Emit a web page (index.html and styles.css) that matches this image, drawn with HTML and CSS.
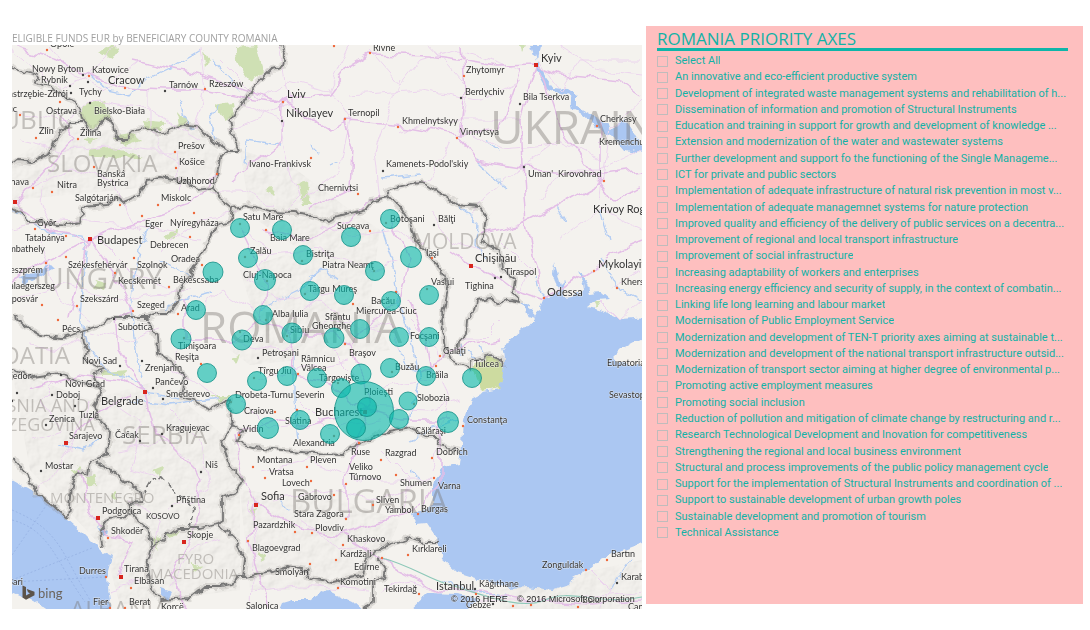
FILE: index.html
```html
<!DOCTYPE html>
<html lang="en">
<head>
<meta charset="utf-8">
<title>Eligible funds by county</title>
<link rel="stylesheet" href="styles.css">
</head>
<body>
<main class="report">
<section class="map-tile">
<h2 class="map-title">ELIGIBLE FUNDS EUR by BENEFICIARY COUNTY ROMANIA</h2>
<svg class="map" viewBox="12 45 630 564" role="img" aria-label="Map of eligible funds by county">
<defs>
<filter id="rough" filterUnits="userSpaceOnUse" x="0" y="30" width="660" height="600"><feTurbulence type="fractalNoise" baseFrequency="0.11" numOctaves="2" seed="4"/><feDisplacementMap in="SourceGraphic" scale="8" xChannelSelector="R" yChannelSelector="G"/></filter>
<filter id="winding" filterUnits="userSpaceOnUse" x="0" y="30" width="660" height="600"><feTurbulence type="fractalNoise" baseFrequency="0.05" numOctaves="2" seed="9"/><feDisplacementMap in="SourceGraphic" scale="14" xChannelSelector="R" yChannelSelector="G"/></filter>
<filter id="relief" filterUnits="userSpaceOnUse" x="0" y="30" width="660" height="600"><feTurbulence type="fractalNoise" baseFrequency="0.09" numOctaves="3" seed="2" result="n"/><feDiffuseLighting in="n" surfaceScale="2" lighting-color="#fff" result="l"><feDistantLight azimuth="225" elevation="55"/></feDiffuseLighting><feComposite in="l" in2="SourceGraphic" operator="in"/></filter>
<path id="frontiers" d="M282 45 286 53 283 66 273 68 253 88 231 120 234 138 239 150 227 150 213 141 200 128 183 125 170 130 160 133 147 128 133 132 128 140 118 140 115 128 107 117 97 127 90 130 82 118 80 112 72 100 50 88 35 82 38 75 28 72 12 67M83 122 70 122 58 135 50 153 33 162 17 160 12 164M227 150 220 158 217 175 212 188 197 190 187 182 160 178 147 180 140 195 123 202 117 197 108 205 82 207 80 222 67 225 43 222 27 222 20 212 12 208M212 188 220 198 233 208 247 205 270 212 293 213 310 215 325 222 333 217 365 210 373 200 390 197 400 207 410 222 415 240 430 257 442 270 448 290 442 320 445 350 450 360 470 368 470 361 490 355 502 360 503 368M390 197 387 190 405 185 420 183 433 188 447 197 457 205 480 207 487 217 483 243 500 250 502 270 515 278 513 293 522 302 510 300 500 304 490 298 477 300 475 310 468 320 467 335 458 342 457 353M233 208 231 222 217 226 203 250 190 273 180 290 177 303 170 312 160 312 147 317 123 317 113 317 100 325 80 332 63 338 40 335 27 327 12 315M82 332 84 342 88 350 86 360 105 370 93 373 97 383 102 388 95 407 97 418 110 432 108 455 90 462 88 475 78 472 72 485 70 508 68 518M12 370 33 377 60 373 78 382 102 387M12 458 27 475 37 493 68 518M97 462 113 472 140 492 142 502 128 503 133 515 110 518 100 532 103 548M133 515 147 528 152 548 147 565 150 588 160 600 190 598 203 587 220 587 233 585 237 577 243 577 245 558 235 540 218 523 200 528 177 528 163 538 152 548M218 523 223 520 223 498 237 492 243 480 230 465 222 442 232 425 228 400 210 410 193 400 182 397 185 377 173 363 158 353 157 337 147 320M230 422 243 432 237 442 253 447 303 452 340 455 357 445 383 433 410 428 427 437 437 437 440 445 460 450M243 577 273 572 287 567 307 570 310 578 333 582 363 575 367 558 373 555 380 547 397 542 410 537 423 542 440 542M377 558 385 568 383 578 373 582 373 602 363 609"/>
<g id="shapes-hill"><path d="M12 160 60 130 200 130 225 160 205 180 120 190 12 200ZM240 150 290 165 350 210 380 230 370 300 390 350 350 355 250 365 230 350 255 320 240 270 300 250 250 215ZM12 370 90 400 160 380 240 450 240 590 120 605 105 550 30 470ZM240 490 340 500 400 520 370 590 250 590ZM500 590 642 560 642 609 500 609Z"/></g>
</defs>
<rect class="land" x="12" y="45" width="630" height="564"/>
<g class="hills" filter="url(#relief)"><use href="#shapes-hill"/></g>
<g class="forest" filter="url(#rough)">
<path d="M235 47 256 45 264 73 250 82 238 65ZM84 104 104 100 110 118 90 128 80 118ZM106 46 120 48 112 60 98 52ZM204 50 210 62 206 66ZM214 105 232 102 234 115 224 122ZM142 120 165 122 160 130 145 130ZM178 112 187 122 180 126ZM90 150 110 148 130 152 142 157 110 158 88 156ZM114 136 134 134 140 140 125 146ZM84 140 98 138 90 144ZM299 184 307 182 311 206 303 206ZM266 190 274 188 272 196ZM520 47 526 46 522 54ZM169 230 177 228 176 240 164 238ZM96 280 108 284 106 290 92 288ZM102 372 128 370 122 376 104 376ZM232 358 240 354 236 364ZM70 470 80 466 76 474ZM86 478 94 476 96 484 86 486ZM152 470 162 466 160 476ZM250 510 258 508 256 518ZM256 550 266 556 260 562ZM150 540 160 536 158 550ZM190 560 200 568 194 572ZM165 535 178 530 172 538ZM112 494 116 492 116 500ZM210 395 230 395 222 402ZM592 300 600 302 596 308Z"/>
<path class="delta" d="M472 367 486 357 498 358 504 370 501 388 482 391 476 380Z"/>
</g>
<g class="water" filter="url(#rough)">
<path d="M544 298 540 307 535 317 523 330 508 343 503 345 505 360 502 380 500 389 483 392 473 397 467 410 464 420 462 445 460 463 443 467 435 477 433 487 433 505 420 513 412 515 417 524 427 523 437 538 442 558 457 572 473 577 507 588 527 587 553 590 570 585 573 578 587 570 602 558 650 540 650 367 617 362 613 357 620 350 650 334 650 317 620 319 600 310 588 307 597 300 610 299 602 292 590 293 583 275 577 270 584 284 585 290 574 296 562 297 566 280 560 286 554 262 553 275 558 292Z"/>
<path d="M5 476 37 494 67 518 83 532 102 551 112 556 107 575 108 588 112 615 55 615 33 600 5 588ZM277 615 282 603 292 600 310 600 327 590 337 595 353 602 367 615ZM405 615 427 594 457 595 480 599 468 605 466 615ZM537 62 544 76 553 88 568 89 577 95 577 107 597 118 612 128 625 120 642 145 650 150 650 156 625 150 615 138 600 130 588 118 572 110 570 97 560 95 545 86 536 70ZM532 45 540 45 537 60ZM20 277 38 270 52 264 56 268 40 277 24 284ZM96 526 106 530 104 538ZM160 588 172 592 168 600 160 596ZM522 302 532 310 536 318 528 316Z"/>
</g>
<g class="rivers" filter="url(#rough)">
<path d="M12 208 30 222 50 232 82 236 86 250 82 290 80 320 90 350 108 372 132 378 150 394 180 398M150 222 140 250 132 290 130 310 136 350 142 378M92 75 108 90 130 95 145 80 170 68 200 50M212 60 228 78 240 90M180 100 184 118 192 130M245 165 247 140 280 145M382 230 392 260 398 300 412 340 420 380 405 430M310 275 325 270 340 280M260 310 300 290 320 270M294 350 294 400 298 440M477 222 476 245 486 260M475 160 490 175 507 188M484 140 500 150M535 276 538 290 545 297M310 145 320 155M330 165 340 160M382 178 420 174M600 258 620 290 640 300M160 260 190 275M210 292 180 300 165 310M130 400 170 405 220 398M215 140 210 118 220 105M60 445 84 450 98 440M410 440 440 425 460 420M410 470 420 480M280 500 290 510M456 204 470 215 476 222M460 345 463 355M468 350 476 360M480 345 484 354M440 580 470 590 510 596M600 210 610 240M400 350 405 365 420 372M610 590 630 560M556 205 566 222"/>
</g>
<g class="roads minor" filter="url(#winding)">
<path d="M12 50 60 90 88 75 120 45M50 45 70 70 100 90 140 60M12 110 60 120 100 100 150 110 200 140M20 140 60 150 110 145 150 150 176 150 180 190M30 190 70 170 110 180 140 230M60 240 40 200 60 150M12 230 60 220 130 225 200 240M12 300 60 285 120 300 190 290M40 240 60 300 90 320M100 240 130 270 170 290M160 250 200 220 240 215M200 45 205 90 195 130M150 90 150 130 180 170M220 60 260 100 290 80 330 90 350 45M230 130 290 105 280 45M290 170 280 120 240 105M330 90 350 120 340 170 300 200M350 95 420 90 480 100 520 80M370 50 400 85 420 60 460 50 520 70M380 200 375 150 385 120 400 80M430 45 470 90 460 130 500 150 560 145M400 130 440 120 520 120M450 140 430 180 400 190M540 60 560 90 580 60 640 60M560 45 600 70 642 75M470 210 520 170 560 140 600 160M540 200 560 170 600 170 642 150M420 245 400 230 350 235 320 225M240 230 270 250 250 280 280 300 340 290M260 255 320 250 370 270 400 260M195 310 220 290 260 315M230 340 280 350 330 320 380 330M190 330 170 370 200 385 220 400M290 320 320 300 360 330 390 320 400 350M257 380 300 370 350 360M240 400 270 430 310 425M300 400 330 430 380 420M330 350 370 390 430 380M410 320 430 340 440 360M440 370 450 400 440 440 430 470M460 400 430 410 370 407M60 380 40 400 60 430 30 440M90 400 70 450 40 490M110 400 140 420 130 470 160 480M170 410 200 440 210 490 170 510M190 460 160 440 120 450M220 540 190 550 170 590M250 500 255 540 250 600M260 470 310 460 360 480 430 480M270 500 330 490 380 500 430 480M300 520 340 550 380 540M400 515 410 480 380 450M250 590 300 585 370 590M480 600 560 600 642 590M590 570 610 590 600 609M600 200 610 130 642 100M560 240 600 210 642 230M500 240 530 270 520 290M600 300 620 320 642 300M430 210 450 240 480 250M610 290 642 270M500 320 480 340 460 340M90 330 130 340 160 330M30 345 60 350 80 340M130 500 160 520 150 560M110 590 140 580M440 590 410 580 380 590M280 215 300 195 290 170M210 190 240 190 270 205"/>
</g>
<g class="roads" filter="url(#winding)">
<path d="M12 45 60 60 90 76 125 88 165 90 205 90 245 98 283 102 290 97 330 93 350 66 370 54 430 56 500 66 537 65 560 75 620 80 642 95M15 205 50 165 76 138 60 110M15 205 50 230 90 240 130 225 190 205 215 175M90 240 75 290 68 320M90 240 115 275 132 310 115 318 118 350 144 392 155 430 195 470 200 480M90 240 40 265 12 280M283 102 282 140 250 165 230 180M283 102 330 130 345 120 405 125 460 135 500 128 520 70M345 120 352 150 350 190 310 210M457 137 475 160 523 167 603 175 642 170M537 65 520 120 522 165 526 225 540 290M460 137 465 90 462 45M603 180 560 205 520 225 480 235M544 300 515 290 495 275 472 265 450 250M544 300 590 270 618 250 642 240M600 120 600 180M185 300 185 340 235 340 260 320 265 280 240 228M260 320 292 335 335 335 350 345 360 330 400 300 410 258 390 220M350 345 365 380 368 410 357 440 345 480 345 520M368 410 400 420 450 420M368 410 320 380 290 375 292 335M368 410 300 425 280 420 237 435M145 392 120 380 80 375 30 390M257 502 240 470 235 435M257 502 300 530 340 535 400 515 420 505M345 535 380 558 400 570 440 590 475 590M257 502 248 540 270 609M200 480 195 530 170 575 185 609M133 60 200 75 283 102M540 70 550 100 560 130 600 180 615 200 642 190M66 445 100 410 130 395M120 575 130 540 105 535 90 510 80 470M470 590 530 600 590 604 642 600M420 370 440 360 470 345 500 340M430 370 425 340 410 300M260 230 300 240 350 220 380 195M440 420 440 480 425 510"/>
</g>
<path class="motorway" d="M382 558C410 565 430 580 450 585S520 612 545 600 600 606 642 597"/>
<path class="ferry" d="M12 580 92 548M12 510C60 530 60 550 90 600M12 520C50 530 55 560 85 602M12 582 105 577M12 555 50 500"/>
<g filter="url(#rough)"><use class="frontier-halo" href="#frontiers"/><use class="frontier" href="#frontiers"/><path class="frontier dashed" d="M143 495 153 478 163 477 175 492 195 508 190 527"/></g>

<g class="country">
<text class="c-46" x="490" y="144">UKRAINE</text><text class="c-44" x="200" y="343">ROMANIA</text>
<text class="c-33" x="290" y="513">BULGARIA</text><text class="c-30" x="20" y="289">HUNGARY</text>
<text class="c-26" x="122" y="444">SERBIA</text><text class="c-24" x="47" y="172">SLOVAKIA</text>
<text class="c-21" x="413" y="249">MOLDOVA</text><text class="c-26 end" x="74" y="129">REPUBLIC</text>
<text class="c-24 end" x="70" y="364">CROATIA</text><text class="c-18 end" x="89" y="412">BOSNIA AND</text>
<text class="c-18 end" x="95" y="431">HERZEGOVINA</text><text class="c-15" x="50" y="503">MONTENEGRO</text>
<text class="c-15" x="177" y="564">FYRO</text><text class="c-15" x="150" y="579">MACEDONIA</text>
<text class="c-24" x="70" y="618">ALBANIA</text>
</g>

<g class="towns">
<path d="M47 50h0M60 102h0M20 115h0M89 76h0M125 88h0M205 89h0M36 138h0M78 139h0M94 167h0M175 152h0M176 168h0M217 174h0M33 188h0M52 192h0M120 205h0M158 205h0M142 216h0M194 213h0M35 229h0M66 236h0M190 237h0M134 258h0M202 265h0M66 257h0M46 263h0M115 273h0M169 287h0M77 306h0M42 305h0M133 311h0M58 320h0M178 314h0M201 364h0M283 102h0M334 46h0M370 53h0M345 119h0M398 127h0M311 158h0M358 194h0M464 76h0M457 138h0M597 126h0M604 181h0M544 298h0M594 271h0M617 288h0M266 230h0M370 231h0M353 304h0M396 292h0M432 258h0M345 344h0M298 374h0M275 412h0M297 410h0M440 356h0M436 366h0M463 426h0M239 435h0M359 443h0M381 460h0M396 475h0M432 458h0M434 478h0M418 514h0M373 505h0M346 519h0M334 495h0M346 484h0M311 481h0M307 467h0M253 467h0M265 478h0M295 532h0M312 533h0M343 545h0M336 560h0M310 564h0M248 541h0M382 558h0M338 588h0M408 555h0M419 594h0M586 570h0M607 560h0M106 577h0M108 538h0M131 588h0M110 608h0M125 608h0M476 594h0M513 606h0M531 605h0M578 607h0"/>
<path class="minor-town" d="M83 75h0M88 82h0M70 86h0M71 93h0M90 103h0M165 91h0M282 121h0M461 98h0M520 104h0M383 171h0M524 167h0M434 225h0M495 278h0M501 277h0M114 319h0M61 375h0M120 366h0M142 361h0M153 388h0M163 399h0M17 393h0M12 401h0M52 395h0M75 406h0M46 425h0M41 471h0M140 441h0M162 434h0M201 472h0M172 506h0M258 358h0M475 589h0M617 583h0M493 604h0"/>
<path class="county-seat" d="M245 257h0M302 261h0M374 271h0M267 281h0M305 294h0M266 320h0M287 336h0M240 332h0M184 338h0M240 224h0M254 378h0M338 383h0M392 372h0M414 404h0M334 436h0M231 402h0M386 223h0M427 289h0"/>
<path class="capital" d="M536 65h0M90 239h0M15 202h0M471 266h0M145 392h0M66 443h0M98 518h0M184 542h0M121 577h0M256 505h0M365 412h0"/>
</g>

<g class="labels">
<text x="50" y="47">Opole</text><text x="32" y="72">Nowy Bytom</text><text x="92" y="73">Katowice</text><text x="41" y="83">Rybnik</text><text class="end" x="68" y="97">Jastrzębie-Zdrój</text><text x="79" y="95">Tychy</text><text x="169" y="88">Tarnów</text><text x="209" y="87">Rzeszów</text><text x="46" y="114">Ostrava</text><text x="94" y="114">Bielsko-Biała</text><text class="end" x="17" y="112">Olomouc</text><text x="39" y="134">Zlin</text><text x="80" y="136">Žilina</text><text x="178" y="149">Prešov</text><text x="179" y="165">Košice</text><text x="97" y="177">Banská</text><text x="97" y="186">Bystrica</text><text class="end" x="29" y="185">Trnava</text><text x="57" y="188">Nitra</text><text x="176" y="184">Uzhhorod</text><text x="75" y="201">Salgótarján</text><text x="161" y="201">Miskolc</text><text x="37" y="226">Győr</text><text x="145" y="227">Eger</text><text x="170" y="226">Nyíregyháza</text><text x="25" y="241">Tatabánya</text><text class="end" x="45" y="252">Szombathely</text><text x="150" y="248">Debrecen</text><text x="171" y="262">Oradea</text><text class="end" x="43" y="273">Veszprém</text><text x="68" y="268">Székesfehérvár</text><text x="137" y="268">Szolnok</text><text x="118" y="284">Kecskemét</text><text x="173" y="283">Békéscsaba</text><text class="end" x="55" y="289">Zalaegerszeg</text><text class="end" x="38" y="302">Kaposvár</text><text x="80" y="302">Szekszárd</text><text x="137" y="308">Szeged</text><text x="181" y="311">Arad</text><text x="62" y="332">Pécs</text><text x="118" y="330">Subotica</text><text x="178" y="349">Timişoara</text><text x="175" y="360">Reşiţa</text><text x="82" y="364">Novi Sad</text><text x="145" y="371">Zrenjanin</text><text class="end" x="31" y="379">Prijedor</text><text x="65" y="387">Novi Grad</text><text x="155" y="385">Pančevo</text><text x="56" y="398">Doboj</text><text x="166" y="397">Smederevo</text><text x="79" y="418">Tuzla</text><text x="49" y="422">Zenica</text><text x="69" y="439">Sarajevo</text><text x="115" y="438">Čačak</text><text x="166" y="431">Kragujevac</text><text x="45" y="469">Mostar</text><text x="205" y="468">Niš</text><text x="176" y="503">Pfiština</text><text class="region" x="146" y="519">KOSOVO</text><text x="102" y="514">Podgorica</text><text x="111" y="534">Shkodër</text><text x="187" y="538">Skopje</text><text x="79" y="574">Durres</text><text x="124" y="572">Tirana</text><text x="134" y="584">Elbasan</text><text class="end" x="23" y="585">Bari</text><text x="93" y="605">Fier</text><text x="129" y="605">Berat</text><text x="161" y="610">Korcë</text>
<text x="373" y="51">Rivne</text><text x="466" y="73">Zhytomyr</text><text x="465" y="95">Berdychiv</text><text x="523" y="100">Bila Tserkva</text><text x="348" y="116">Ternopil</text><text x="402" y="124">Khmelnytskyy</text><text x="460" y="135">Vinnytsya</text><text x="600" y="122">Cherkasy</text><text x="599" y="145">Kremenchuk</text><text x="249" y="167">Ivano-Frankivsk</text><text x="386" y="167">Kamenets-Podol'skiy</text><text x="528" y="177">Uman'</text><text x="558" y="177">Kirovohrad</text><text x="318" y="191">Chernivtsi</text><text x="243" y="220">Satu Mare</text><text x="270" y="241">Baia Mare</text><text x="337" y="229">Suceava</text><text x="390" y="222">Botoşani</text><text x="438" y="222">Bălţi</text><text x="250" y="254">Zalău</text><text x="306" y="257">Bistriţa</text><text x="322" y="268">Piatra Neamţ</text><text x="243" y="278">Cluj-Napoca</text><text x="426" y="256">Iaşi</text><text x="431" y="285">Vaslui</text><text x="505" y="275">Tiraspol</text><text x="465" y="289">Tighina</text><text x="308" y="292">Târgu Mureş</text><text x="371" y="304">Bacău</text><text x="356" y="314">Miercurea-Ciuc</text><text x="272" y="317">Alba Iulia</text><text x="325" y="320">Sfântu</text><text x="312" y="329">Gheorghe</text><text x="290" y="333">Sibiu</text><text x="410" y="339">Focşani</text><text x="243" y="342">Deva</text><text x="262" y="356">Petroşani</text><text x="349" y="356">Braşov</text><text x="443" y="354">Galaţi</text><text x="301" y="362">Râmnicu</text><text x="301" y="371">Vâlcea</text><text x="395" y="370">Buzău</text><text x="474" y="367">Tulcea</text><text x="258" y="374">Tîrgu Jiu</text><text x="319" y="381">Târgovişte</text><text x="426" y="378">Brăila</text><text x="364" y="395">Ploieşti</text><text x="235" y="398">Drobeta-Turnu Severin</text><text x="417" y="401">Slobozia</text><text x="244" y="414">Craiova</text><text x="285" y="424">Slatina</text><text x="467" y="423">Constanţa</text><text x="243" y="432">Vidin</text><text x="415" y="434">Călăraşi</text><text x="293" y="446">Alexandria</text><text x="351" y="455">Ruse</text><text x="385" y="456">Razgrad</text><text x="436" y="455">Dobrich</text><text x="257" y="463">Montana</text><text x="310" y="463">Pleven</text><text x="349" y="470">Veliko</text><text x="349" y="480">Tŭrnovo</text><text x="269" y="475">Vratsa</text><text x="282" y="486">Lovech</text><text x="400" y="486">Shumen</text><text x="438" y="489">Varna</text><text x="298" y="500">Gabrovo</text><text x="376" y="503">Sliven</text><text x="385" y="513">Yambol</text><text x="421" y="512">Burgas</text><text x="294" y="517">Stara Zagora</text><text x="253" y="528">Pazardzhik</text><text x="315" y="531">Plovdiv</text><text x="347" y="542">Khaskovo</text><text x="252" y="551">Blagoevgrad</text><text x="340" y="557">Kardžali</text><text x="412" y="552">Kırklareli</text><text x="354" y="570">Edirne</text><text x="275" y="575">Smolyan</text><text x="340" y="585">Komotini</text><text x="384" y="592">Tekirdağ</text><text x="246" y="609">Salonica</text><text x="479" y="587">Kâğıthane</text><text x="466" y="608">Gebze</text><text x="542" y="568">Zonguldak</text><text x="611" y="557">Bartın</text><text x="621" y="580">Karabük</text><text x="628" y="610">Cankırı</text><text x="582" y="603">Bolu</text><text x="621" y="285">Kherson</text><text x="607" y="366">Eupatoria</text><text x="609" y="398">Sevastopol</text>
</g>
<g class="labels city">
<text x="108" y="84">Cracow</text><text x="287" y="98">Lviv</text><text x="286" y="117">Nikolayev</text><text x="541" y="62">Kyiv</text><text x="97" y="244">Budapest</text><text x="101" y="405">Belgrade</text><text x="475" y="262">Chişinău</text><text x="547" y="296">Odessa</text><text x="598" y="268">Mykolayiv</text><text x="593" y="213">Krivoy Rog</text><text x="261" y="500">Sofia</text><text x="315" y="416">Bucharest</text><text x="436" y="590">Istanbul</text>
</g>

<g class="bubbles">
<circle cx="240" cy="228" r="9.5"/><circle cx="282" cy="230" r="9.5"/><circle cx="351" cy="237" r="9.5"/><circle cx="390" cy="219" r="9.5"/><circle cx="411" cy="257" r="10.5"/><circle cx="248" cy="258" r="9.5"/><circle cx="303" cy="255" r="9.5"/><circle cx="213" cy="272" r="10"/><circle cx="265" cy="280" r="10.5"/><circle cx="375" cy="271" r="9.5"/><circle cx="310" cy="291" r="9.5"/><circle cx="344" cy="295" r="9.5"/><circle cx="391" cy="301" r="9.5"/><circle cx="429" cy="295" r="9.5"/><circle cx="196" cy="310" r="9.5"/><circle cx="263" cy="315" r="9.5"/><circle cx="181" cy="339" r="10"/><circle cx="242" cy="340" r="10"/><circle cx="292" cy="333" r="10"/><circle cx="334" cy="338" r="10"/><circle cx="360" cy="329" r="9.5"/><circle cx="399" cy="337" r="9.5"/><circle cx="429" cy="337" r="9.5"/><circle cx="207" cy="373" r="9.5"/><circle cx="257" cy="381" r="9.5"/><circle cx="287" cy="376" r="9.5"/><circle cx="317" cy="378" r="9.5"/><circle cx="361" cy="374" r="10"/><circle cx="390" cy="368" r="9.5"/><circle cx="426" cy="376" r="9.5"/><circle cx="472" cy="378" r="9.5"/><circle cx="341" cy="388" r="9.5"/><circle cx="364" cy="411" r="29.5"/><circle cx="367" cy="407" r="9.5"/><circle cx="408" cy="401" r="9"/><circle cx="399" cy="419" r="9.5"/><circle cx="356" cy="428" r="9.5"/><circle cx="448" cy="422" r="10.5"/><circle cx="236" cy="404" r="9.5"/><circle cx="268" cy="428" r="10.5"/><circle cx="300" cy="420" r="9.5"/><circle cx="330" cy="434" r="9.5"/>
</g>
<path class="bing-mark" d="M22.500 585.500 26 587V595.500L30 593.300 28 592.300 26.800 589 34.500 591.800V595.200L26 599.800 22.500 597.500Z"/>
<text class="bing-name" x="38" y="598">bing</text>
<text class="credit" x="451" y="602">© 2016 HERE</text><text class="credit" x="517" y="602">© 2016 Microsoft Corporation</text>
</svg>
</section>

<section class="slicer">
<h2 class="slicer-title">ROMANIA PRIORITY AXES</h2>
<ul class="options">
<li><label class="option"><input type="checkbox"><span>Select All</span></label></li>
<li><label class="option"><input type="checkbox"><span>An innovative and eco-efficient productive system</span></label></li>
<li><label class="option"><input type="checkbox"><span>Development of integrated waste management systems and rehabilitation of h...</span></label></li>
<li><label class="option"><input type="checkbox"><span>Dissemination of information and promotion of Structural Instruments</span></label></li>
<li><label class="option"><input type="checkbox"><span>Education and training in support for growth and development of knowledge ...</span></label></li>
<li><label class="option"><input type="checkbox"><span>Extension and modernization of the water and wastewater systems</span></label></li>
<li><label class="option"><input type="checkbox"><span>Further development and support fo the functioning of the Single Manageme...</span></label></li>
<li><label class="option"><input type="checkbox"><span>ICT for private and public sectors</span></label></li>
<li><label class="option"><input type="checkbox"><span>Implementation of adequate infrastructure of natural risk prevention in most v...</span></label></li>
<li><label class="option"><input type="checkbox"><span>Implementation of adequate managemnet systems for nature protection</span></label></li>
<li><label class="option"><input type="checkbox"><span>Improved quality and efficiency of the delivery of public services on a decentra...</span></label></li>
<li><label class="option"><input type="checkbox"><span>Improvement of regional and local transport infrastructure</span></label></li>
<li><label class="option"><input type="checkbox"><span>Improvement of social infrastructure</span></label></li>
<li><label class="option"><input type="checkbox"><span>Increasing adaptability of workers and enterprises</span></label></li>
<li><label class="option"><input type="checkbox"><span>Increasing energy efficiency and security of supply, in the context of combatin...</span></label></li>
<li><label class="option"><input type="checkbox"><span>Linking life long learning and labour market</span></label></li>
<li><label class="option"><input type="checkbox"><span>Modernisation of Public Employment Service</span></label></li>
<li><label class="option"><input type="checkbox"><span>Modernization and development of TEN-T priority axes aiming at sustainable t...</span></label></li>
<li><label class="option"><input type="checkbox"><span>Modernization and development of the national transport infrastructure outsid...</span></label></li>
<li><label class="option"><input type="checkbox"><span>Modernization of transport sector aiming at higher degree of environmental p...</span></label></li>
<li><label class="option"><input type="checkbox"><span>Promoting active employment measures</span></label></li>
<li><label class="option"><input type="checkbox"><span>Promoting social inclusion</span></label></li>
<li><label class="option"><input type="checkbox"><span>Reduction of pollution and mitigation of climate change by restructuring and r...</span></label></li>
<li><label class="option"><input type="checkbox"><span>Research Technological Development and Inovation for competitiveness</span></label></li>
<li><label class="option"><input type="checkbox"><span>Strengthening the regional and local business environment</span></label></li>
<li><label class="option"><input type="checkbox"><span>Structural and process improvements of the public policy management cycle</span></label></li>
<li><label class="option"><input type="checkbox"><span>Support for the implementation of Structural Instruments and coordination of ...</span></label></li>
<li><label class="option"><input type="checkbox"><span>Support to sustainable development of urban growth poles</span></label></li>
<li><label class="option"><input type="checkbox"><span>Sustainable development and promotion of tourism</span></label></li>
<li><label class="option"><input type="checkbox"><span>Technical Assistance</span></label></li>
</ul>
</section>
</main>
</body>
</html>
```

FILE: styles.css
```css
* { box-sizing: border-box; }
body { margin: 0; background: #fff; font-family: Lato, "Open Sans", sans-serif; }
.report { display: grid; grid-template-columns: 630fr 437fr; gap: 4px; align-items: start; padding: 26px 7px 20px 12px; }
.map-tile, .slicer { min-width: 0; }
.map-tile { padding-top: 6px; }
.map-title { margin: 0; font-family: "Open Sans", "Noto Sans", sans-serif; font-size: 10px; line-height: 13px; font-weight: 400; color: #a0a0a0; white-space: nowrap; }
.map { display: block; width: 100%; height: auto; overflow: hidden; }

.land { fill: #f4f2ee; }
.hills { opacity: .2; mix-blend-mode: multiply; }
.forest { fill: #cfe0b4; }
.delta { fill: #cddba0; }
.water { fill: #abc7f2; }
.rivers { fill: none; stroke: #b3cdf3; stroke-width: 1.3; }
.roads { fill: none; stroke: #e4bfe7; stroke-width: 1.5; stroke-linejoin: round; }
.roads.minor { stroke: #ecd5ee; stroke-width: 1; }
.motorway { fill: none; stroke: #8cc8b8; stroke-width: 1.2; }
.ferry { fill: none; stroke: #8fa9de; stroke-width: .6; stroke-dasharray: 2 2; }
.frontier { fill: none; stroke: #777; stroke-width: 1.8; stroke-linejoin: round; }
.frontier-halo { fill: none; stroke: #8a8580; stroke-opacity: .22; stroke-width: 6; stroke-linejoin: round; }
.dashed { stroke-dasharray: 6 3; }

.country { font-family: "Open Sans", "Noto Sans", sans-serif; fill: #77736e; fill-opacity: .4; }
.c-46 { font-size: 46px; }
.c-44 { font-size: 44px; }
.c-33 { font-size: 33px; }
.c-30 { font-size: 30px; }
.c-26 { font-size: 26px; }
.c-24 { font-size: 24px; }
.c-21 { font-size: 21px; }
.c-18 { font-size: 18px; }
.c-15 { font-size: 15px; }
.end { text-anchor: end; }
.towns { fill: none; stroke: #ee6a3c; stroke-width: 2.4; stroke-linecap: round; }
.minor-town { stroke: #444; }
.county-seat { stroke: #b98a74; }
.capital { stroke: #d8251d; stroke-linecap: square; stroke-width: 4; }
.labels { font-size: 9px; fill: #333; stroke: #f8f6f3; stroke-opacity: .6; stroke-width: 1px; paint-order: stroke; }
.labels.city { font-size: 11px; }
.region { font-size: 8px; }
.bubbles { fill: #01b8aa; fill-opacity: .6; stroke: #128f86; stroke-opacity: .8; stroke-width: 1; }
.bing-mark { fill: #5c5349; }
.bing-name { font-size: 13px; fill: #6b645d; }
.credit { font-family: "Liberation Sans", Arial, sans-serif; font-size: 9px; fill: #222; stroke: #f8f6f3; stroke-opacity: .5; stroke-width: 1px; paint-order: stroke; }

.slicer { min-height: 578px; padding: 2px 4px 24px 11px; background: #febfbf; color: #13b2a6; }
.slicer-title { margin: 0 11px 2px 0; height: 23px; border-bottom: 3px solid #0fb5a9; font-family: "Open Sans", "Noto Sans", sans-serif; font-size: 17px; line-height: 21px; font-weight: 400; white-space: nowrap; }
.options { display: grid; grid-template-columns: minmax(0, 1fr); grid-auto-rows: 1fr; min-height: 488px; margin: 0; padding: 0; list-style: none; }
.option { display: flex; align-items: center; gap: 7px; height: 100%; font-family: Roboto, "Open Sans", sans-serif; font-size: 11px; line-height: 16px; }
.option span { min-width: 0; overflow: hidden; text-overflow: ellipsis; white-space: nowrap; }
.option input { appearance: none; flex: none; width: 11px; height: 11px; margin: 0; border: 1px solid #c0bcbc; }
.option input:checked { background: #13b2a6; }
```
